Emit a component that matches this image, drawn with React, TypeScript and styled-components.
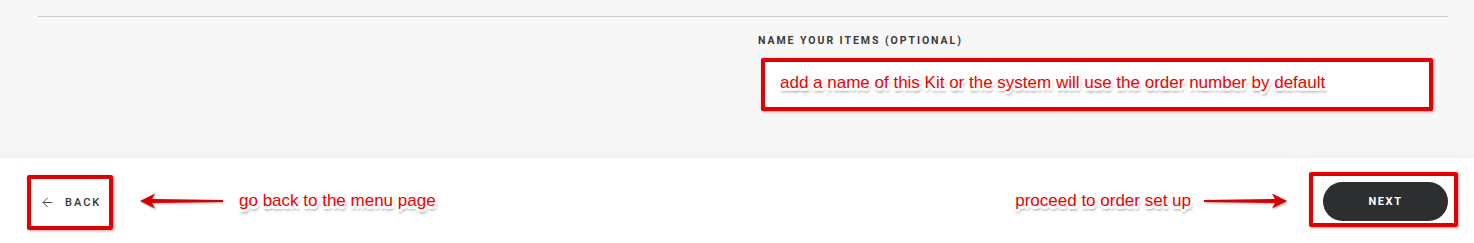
import React from 'react';
import styled, { createGlobalStyle } from 'styled-components';
import { ArrowLeft } from 'lucide-react';

const GlobalStyle = createGlobalStyle`
    html, body {
        margin: 0;
        padding: 0;
        background: #ffffff;
    }
    body {
        font-family: Roboto, "Liberation Sans", Arial, sans-serif;
    }
`

const Page = styled.div`
    display: flex;
    flex-direction: column;
    width: 1474px;
    height: 243px;
    overflow: hidden;
`
const FormArea = styled.div`
    display: flex;
    flex-direction: column;
    background: #f7f7f7;
    padding: 16px 26px 47px 38px;
`
const Divider = styled.div`
    height: 1px;
    background: #cccccc;
`
const FieldRow = styled.div`
    display: flex;
    flex-direction: row;
`
const Spacer = styled.div`
    width: 720px;
    flex-shrink: 0;
`
const Field = styled.div`
    display: flex;
    flex-direction: column;
    padding-top: 18px;
`
const Label = styled.span`
    font-family: Roboto, "Liberation Sans", sans-serif;
    font-size: 10.5px;
    line-height: 12px;
    font-weight: 700;
    letter-spacing: 1.95px;
    color: #3a3a3a;
`
const Highlight = styled.div`
    display: flex;
    align-items: center;
    border: 4px solid #e30000;
    border-radius: 2px;
    box-shadow: 1px 1px 3px rgba(0, 0, 0, 0.35);
    box-sizing: border-box;
`
const NameInput = styled(Highlight)`
    margin: 11px 0 0 3px;
    width: 672px;
    height: 53px;
    background: #ffffff;
    padding: 0 0 4px 15px;
`
const Note = styled.span`
    font-family: "Liberation Sans", Arial, sans-serif;
    font-size: 17px;
    color: #ee0000;
    white-space: nowrap;
    text-shadow:
        -2px -1px 0 #fff, 2px -1px 0 #fff,
        -2px 2px 0 #fff, 2px 2px 0 #fff,
        0 3px 0 #fff, -1px 3px 0 #fff, 1px 3px 0 #fff,
        1px 4px 3px rgba(0, 0, 0, 0.6);
`
const Footer = styled.div`
    display: flex;
    flex-direction: row;
    align-items: center;
    justify-content: space-between;
    flex: 1;
    background: #ffffff;
    padding: 0 16px 0 27px;
    box-shadow: 0 -3px 7px rgba(0, 0, 0, 0.035);
`
const Group = styled.div`
    display: flex;
    flex-direction: row;
    align-items: center;
`
const BackBox = styled(Highlight)`
    width: 86px;
    height: 55px;
    margin-top: 4px;
    padding-left: 9px;
    gap: 10px;
    color: #444444;
`
const BackText = styled.span`
    font-family: Roboto, "Liberation Sans", sans-serif;
    font-size: 11px;
    font-weight: 500;
    letter-spacing: 2px;
    color: #333333;
`
const NextBox = styled(Highlight)`
    width: 149px;
    height: 55px;
    margin-top: -2px;
    padding: 5px 6px 2px 10px;
`
const NextButton = styled.div`
    display: flex;
    align-items: center;
    justify-content: center;
    width: 125px;
    height: 39px;
    border-radius: 20px;
    background: #2d2e30;
    color: #ffffff;
    font-family: Roboto, "Liberation Sans", sans-serif;
    font-size: 11px;
    font-weight: 700;
    letter-spacing: 1.6px;
    cursor: pointer;
`
const Pointer = styled.svg<{ $gap: string }>`
    margin: ${p => p.$gap};
    filter: drop-shadow(1px 1px 1px rgba(0, 0, 0, 0.35));
`

const RedArrow = ({ flip, gap }: { flip?: boolean, gap: string }) => (
    <Pointer $gap={gap} width="86" height="18" viewBox="0 0 86 18">
        <g transform={flip ? 'translate(86 0) scale(-1 1)' : undefined}>
            <path d="M1 9 L16 1.5 L13 7 L84 8 L84 10 L13 11 L16 16.5 Z" fill="#d40000" />
        </g>
    </Pointer>
)

export default function App() {
    return (
        <Page>
            <GlobalStyle />
            <FormArea>
                <Divider />
                <FieldRow>
                    <Spacer />
                    <Field>
                        <Label>NAME YOUR ITEMS (OPTIONAL)</Label>
                        <NameInput>
                            <Note>add a name of this Kit or the system will use the order number by default</Note>
                        </NameInput>
                    </Field>
                </FieldRow>
            </FormArea>
            <Footer>
                <Group>
                    <BackBox>
                        <ArrowLeft size={15} strokeWidth={1.5} />
                        <BackText>BACK</BackText>
                    </BackBox>
                    <RedArrow gap="0 14px 0 26px" />
                    <Note>go back to the menu page</Note>
                </Group>
                <Group>
                    <Note>proceed to order set up</Note>
                    <RedArrow flip gap="0 21px 0 11px" />
                    <NextBox>
                        <NextButton>NEXT</NextButton>
                    </NextBox>
                </Group>
            </Footer>
        </Page>
    )
}
